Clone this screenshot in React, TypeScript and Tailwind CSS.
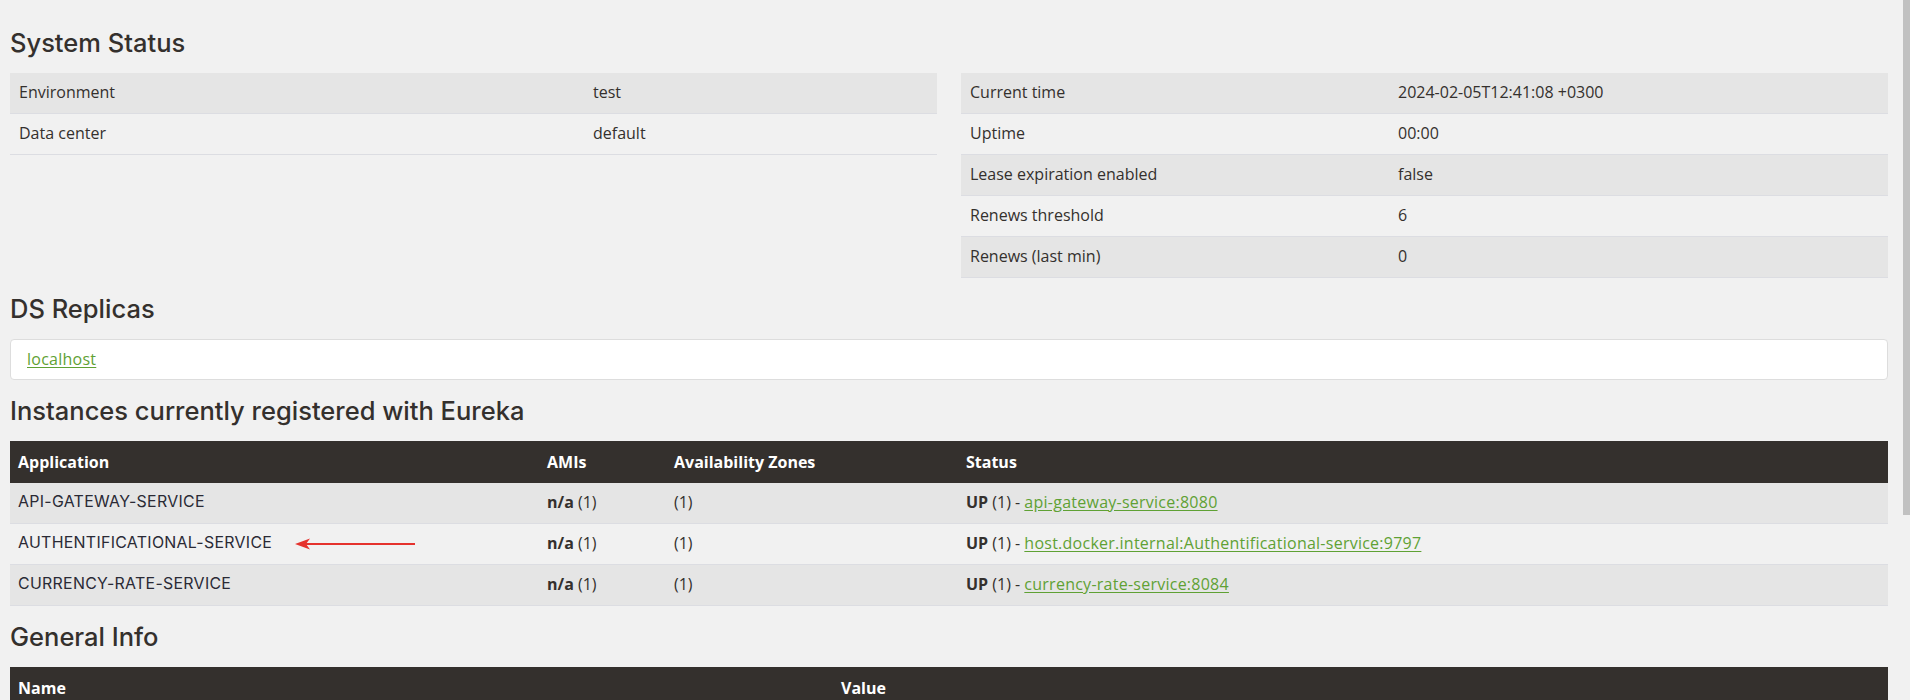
import React from 'react';

const body = "font-['Open_Sans',sans-serif] text-[16px] leading-[22px] text-[#34302d]";
const link = 'text-[#5fa134] underline underline-offset-2 tracking-[0.25px]';
const wide = "font-['Inter',sans-serif] text-[15.9px] tracking-[0.3px] text-[#2a2a35]";

const Heading: React.FC<{ children: React.ReactNode }> = ({ children }) => (
    <h2 className="mt-[20px] mb-[15px] h-[26px] font-['Inter',sans-serif] text-[25.5px] leading-[22px] font-medium text-[#34302d]">
        {children}
    </h2>
);

const KeyValueTable: React.FC<{ rows: [string, string][]; keyWidth: string }> = ({ rows, keyWidth }) => (
    <div>
        {rows.map(([k, v], i) => (
            <div
                key={k}
                className={`grid ${keyWidth} h-[41px] items-center border-b border-[#dcdde2] ${i % 2 === 0 ? 'bg-[#e5e5e5]' : ''}`}
            >
                <div className="px-[9px] pb-[3px]">{k}</div>
                <div className="px-[9px] pb-[3px]">{v}</div>
            </div>
        ))}
    </div>
);

const RedArrow = () => (
    <svg className="absolute left-[285px] top-[6px]" width="122" height="12" viewBox="0 0 122 12">
        <path d="M0 6 L15 0.5 L11 6 L15 11.5 Z" fill="#e5322d" />
        <line x1="10" y1="6" x2="120" y2="6" stroke="#e5322d" strokeWidth="2" />
    </svg>
);

type Instance = { name: string; target: string };

const instances: Instance[] = [
    { name: 'API-GATEWAY-SERVICE', target: 'api-gateway-service:8080' },
    { name: 'AUTHENTIFICATIONAL-SERVICE', target: 'host.docker.internal:Authentificational-service:9797' },
    { name: 'CURRENCY-RATE-SERVICE', target: 'currency-rate-service:8084' },
];

const instCols = 'grid-cols-[529px_127px_292px_1fr]';

export default function App() {
    return (
        <div className={`relative h-[700px] overflow-hidden bg-[#f1f1f1] pl-[10px] pr-[22px] pt-[12px] ${body}`}>
            <Heading>System Status</Heading>
            <div className="grid grid-cols-2 gap-[24px] items-start">
                <KeyValueTable
                    keyWidth="grid-cols-[574px_1fr]"
                    rows={[
                        ['Environment', 'test'],
                        ['Data center', 'default'],
                    ]}
                />
                <KeyValueTable
                    keyWidth="grid-cols-[428px_1fr]"
                    rows={[
                        ['Current time', '2024-02-05T12:41:08 +0300'],
                        ['Uptime', '00:00'],
                        ['Lease expiration enabled', 'false'],
                        ['Renews threshold', '6'],
                        ['Renews (last min)', '0'],
                    ]}
                />
            </div>

            <Heading>DS Replicas</Heading>
            <div className="flex h-[41px] items-center rounded-[4px] border border-[#dddddd] bg-white px-[16px] pb-[2px]">
                <a href="#" className={link}>localhost</a>
            </div>

            <Heading>Instances currently registered with Eureka</Heading>
            <div>
                <div className={`grid ${instCols} h-[42px] items-center bg-[#34302d] font-bold text-white`}>
                    <div className="px-[8px]">Application</div>
                    <div className="px-[8px]">AMIs</div>
                    <div className="px-[8px]">Availability Zones</div>
                    <div className="px-[8px]">Status</div>
                </div>
                {instances.map((inst, i) => (
                    <div
                        key={inst.name}
                        className={`grid ${instCols} h-[41px] items-center border-b border-[#dcdde2] ${i % 2 === 0 ? 'bg-[#e5e5e5]' : ''}`}
                    >
                        <div className={`relative px-[8px] pb-[3px] ${wide}`}>
                            {inst.name}
                            {i === 1 && <RedArrow />}
                        </div>
                        <div className="px-[8px] pb-[3px]">
                            <b>n/a</b> (1)
                        </div>
                        <div className="px-[8px] pb-[3px]">(1)</div>
                        <div className="px-[8px] pb-[3px]">
                            <b>UP</b> (1) - <a href="#" className={link}>{inst.target}</a>
                        </div>
                    </div>
                ))}
            </div>

            <Heading>General Info</Heading>
            <div className="grid grid-cols-[823px_1fr] h-[42px] items-center bg-[#34302d] font-bold text-white">
                <div className="px-[8px]">Name</div>
                <div className="px-[8px]">Value</div>
            </div>

            <div className="fixed right-0 top-0 h-[515px] w-[7px] bg-[#c1c1c1]" />
        </div>
    );
}
